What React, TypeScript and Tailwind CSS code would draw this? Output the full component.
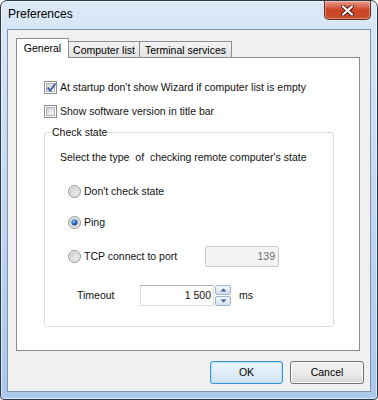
import React, { useId } from 'react';

const font = "font-['Liberation_Sans',Arial,sans-serif]";

function CheckBox({ checked }: { checked?: boolean }) {
  return (
    <span className="relative flex h-[13px] w-[13px] shrink-0 border border-[#8e8f8f] bg-white p-[1px]">
      <span className="flex-1 border border-[#b0b4ba] bg-gradient-to-br from-[#cfd3d9] to-[#f7f7f7]" />
      {checked && (
        <svg className="absolute left-[1px] top-[0px]" width="11" height="11" viewBox="0 0 11 11">
          <path d="M1.6 5.6 L4.2 8.6 L9.6 1.4" fill="none" stroke="#3c55a0" strokeWidth="1.7" />
        </svg>
      )}
    </span>
  );
}

function Radio({ checked }: { checked?: boolean }) {
  const id = useId().replace(/:/g, '');
  return (
    <svg width="13" height="13" viewBox="0 0 13 13" className="shrink-0">
      <defs>
        <linearGradient id={`o${id}`} x1="0" y1="0" x2="1" y2="1">
          <stop offset="0" stopColor="#c9ccd1" />
          <stop offset="1" stopColor="#f8f8f8" />
        </linearGradient>
        <radialGradient id={`b${id}`} cx="0.4" cy="0.35" r="0.7">
          <stop offset="0" stopColor="#a9d3f6" />
          <stop offset="0.45" stopColor="#2a78c8" />
          <stop offset="1" stopColor="#0d3e7a" />
        </radialGradient>
      </defs>
      <circle cx="6.5" cy="6.5" r="6" fill="#f4f4f4" stroke="#8e8f8f" />
      <circle cx="6.5" cy="6.5" r="4.3" fill={`url(#o${id})`} stroke="#b3b6bb" strokeWidth="0.6" />
      {checked && <circle cx="6.5" cy="6.5" r="3" fill={`url(#b${id})`} />}
    </svg>
  );
}

function SpinArrow({ up }: { up?: boolean }) {
  return (
    <span className="flex h-[10px] w-[16px] items-center justify-center rounded-[2px] border border-[#a3b5cb] bg-gradient-to-b from-[#f5f8fc] to-[#d3dfec]">
      <svg width="7" height="4" viewBox="0 0 7 4">
        <path d={up ? 'M0.5 3.5 L3.5 0.5 L6.5 3.5 Z' : 'M0.5 0.5 L3.5 3.5 L6.5 0.5 Z'} fill="#3c5a8a" />
      </svg>
    </span>
  );
}

function CloseButton() {
  return (
    <div className="flex h-[19px] w-[47px] items-center justify-center rounded-b-[5px] border border-t-0 border-[#6b2a1c] bg-gradient-to-b from-[#e79c8a] via-[#cc4124] to-[#c6512f] shadow-[inset_0_0_0_1px_rgba(255,255,255,0.35)]">
      <svg width="13" height="11" viewBox="0 0 13 11">
        <path d="M2 1.5 L11 9.5 M11 1.5 L2 9.5" stroke="#4a1b12" strokeWidth="4" strokeLinecap="round" />
        <path d="M2 1.5 L11 9.5 M11 1.5 L2 9.5" stroke="#ffffff" strokeWidth="2.2" strokeLinecap="round" />
      </svg>
    </div>
  );
}

function Tab({ label, active, width }: { label: string; active?: boolean; width: string }) {
  if (active) {
    return (
      <div className={`relative z-10 flex h-[20px] ${width} items-start justify-center border border-b-0 border-[#898c95] bg-white pt-[3px] leading-[13px] text-black`}>
        {label}
      </div>
    );
  }
  return (
    <div className={`flex h-[17px] ${width} items-start justify-center border border-b-0 border-l-0 border-[#898c95] bg-gradient-to-b from-[#f3f3f3] to-[#e2e2e2] pt-[2px] leading-[13px] text-black`}>
      {label}
    </div>
  );
}

export default function App() {
  return (
    <div className={`${font} h-[400px] w-[378px] text-[10.5px] leading-[13px] text-[#111]`}>
      <div className="flex h-[400px] w-[378px] flex-col rounded-t-[7px] rounded-b-[4px] border border-[#2d3a47] bg-gradient-to-b from-[#dbe8f7] via-[#c2d8f1] to-[#a9c8ec] px-[6px] pb-[7px] shadow-[inset_0_0_0_1px_rgba(255,255,255,0.55)]">
        <div className="flex h-[28px] shrink-0 items-start justify-between">
          <span className="mt-[6px] pl-[1px] text-[12px] leading-[15px] text-black">Preferences</span>
          <CloseButton />
        </div>
        <div className="flex flex-1 flex-col border border-[#7f93ad] bg-[#f0f0f0] pl-[8px] pt-[8px]">
          <div className="flex items-end">
            <Tab label="General" active width="w-[53px]" />
            <Tab label="Computer list" width="w-[71px]" />
            <Tab label="Terminal services" width="w-[92px]" />
          </div>
          <div className="-mt-px flex h-[294px] w-[344px] flex-col border border-[#898c95] bg-white pl-[27px]">
            <label className="mt-[21px] flex h-[16px] items-center gap-[3px]">
              <CheckBox checked />
              <span>At startup don't show Wizard if computer list is empty</span>
            </label>
            <label className="mt-[8px] flex h-[16px] items-center gap-[3px]">
              <CheckBox />
              <span>Show software version in title bar</span>
            </label>
            <fieldset className="mt-[7px] h-[201px] w-[290px] rounded-[3px] border border-[#d5dfe5] px-0">
              <legend className="ml-[6px] px-[1px] leading-[13px]">Check state</legend>
              <div className="mt-[11px] pl-[15px] leading-[14px]">
                Select the type&nbsp; of&nbsp; checking remote computer's state
              </div>
              <label className="ml-[23px] mt-[19px] flex h-[16px] items-center gap-[3px]">
                <Radio />
                <span>Don't check state</span>
              </label>
              <label className="ml-[23px] mt-[15px] flex h-[16px] items-center gap-[3px]">
                <Radio checked />
                <span>Ping</span>
              </label>
              <div className="ml-[23px] mt-[16px] flex h-[21px] items-center">
                <label className="flex w-[137px] items-center gap-[3px]">
                  <Radio />
                  <span>TCP connect to port</span>
                </label>
                <div className="flex h-[21px] w-[74px] items-center justify-end rounded-[2px] border border-[#c9cdd2] bg-[#f4f4f4] pr-[3px] text-[#6d6d6d]">
                  139
                </div>
              </div>
              <div className="ml-[32px] mt-[18px] flex h-[21px] items-center">
                <span className="w-[63px]">Timeout</span>
                <div className="flex h-[21px] w-[74px] items-center justify-end border border-[#dbdfe6] border-t-[#abadb3] bg-white pr-[2px]">
                  1 500
                </div>
                <div className="ml-px flex flex-col gap-px">
                  <SpinArrow up />
                  <SpinArrow />
                </div>
                <span className="ml-[8px]">ms</span>
              </div>
            </fieldset>
          </div>
          <div className="mt-[10px] flex justify-end gap-[7px] pr-[6px]">
            <button className="flex h-[23px] w-[73px] items-center justify-center rounded-[3px] border border-[#3c93cf] bg-gradient-to-b from-[#eef6fc] via-[#e0edf7] to-[#cfe1ef] shadow-[inset_0_0_0_1px_#b8e2f8] text-[10.5px] text-black">
              OK
            </button>
            <button className="flex h-[23px] w-[74px] items-center justify-center rounded-[3px] border border-[#707070] bg-gradient-to-b from-[#f2f2f2] via-[#ebebeb] to-[#d6d6d6] shadow-[inset_0_0_0_1px_#fcfcfc] text-[10.5px] text-black">
              Cancel
            </button>
          </div>
        </div>
      </div>
    </div>
  );
}
